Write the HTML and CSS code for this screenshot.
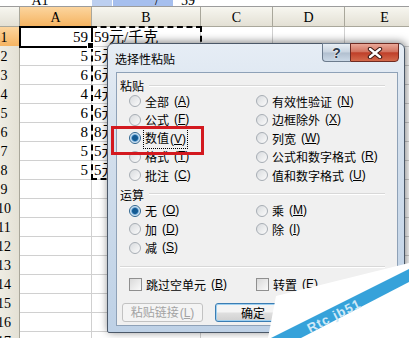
FILE: index.html
```html
<!DOCTYPE html>
<html lang="zh-CN">
<head>
<meta charset="UTF-8">
<meta name="viewport" content="width=device-width, initial-scale=1.0">
<title>选择性粘贴 - 数值</title>
<link rel="stylesheet" href="styles.css">
</head>
<body>

<div id="excel">

<div class="formula-bar">
<div class="name-box"><span>A1</span></div>
<div class="fx-btn"></div>
<div class="fx-btn wide"><span>/</span></div>
<div class="formula"><span>59</span></div>
</div>

<div class="row head">
<div class="corner"></div>
<div class="col active">A</div>
<div class="col">B</div>
<div class="col">C</div>
<div class="col">D</div>
<div class="col">E</div>
</div>

<div class="row"><div class="num active">1</div><div class="cell val current">59</div><div class="cell">59元/千克</div><div class="cell"></div><div class="cell"></div><div class="cell"></div></div>
<div class="row"><div class="num">2</div><div class="cell val">5</div><div class="cell">5元/千克</div><div class="cell"></div><div class="cell"></div><div class="cell"></div></div>
<div class="row"><div class="num">3</div><div class="cell val">6</div><div class="cell">6元/千克</div><div class="cell"></div><div class="cell"></div><div class="cell"></div></div>
<div class="row"><div class="num">4</div><div class="cell val">4</div><div class="cell">4元/千克</div><div class="cell"></div><div class="cell"></div><div class="cell"></div></div>
<div class="row"><div class="num">5</div><div class="cell val">6</div><div class="cell">6元/千克</div><div class="cell"></div><div class="cell"></div><div class="cell"></div></div>
<div class="row"><div class="num">6</div><div class="cell val">8</div><div class="cell">8元/千克</div><div class="cell"></div><div class="cell"></div><div class="cell"></div></div>
<div class="row"><div class="num">7</div><div class="cell val">5</div><div class="cell">5元/千克</div><div class="cell"></div><div class="cell"></div><div class="cell"></div></div>
<div class="row"><div class="num">8</div><div class="cell val">5</div><div class="cell">5元/千克</div><div class="cell"></div><div class="cell"></div><div class="cell"></div></div>
<div class="row"><div class="num">9</div><div class="cell"></div><div class="cell"></div><div class="cell"></div><div class="cell"></div><div class="cell"></div></div>
<div class="row"><div class="num">10</div><div class="cell"></div><div class="cell"></div><div class="cell"></div><div class="cell"></div><div class="cell"></div></div>
<div class="row"><div class="num">11</div><div class="cell"></div><div class="cell"></div><div class="cell"></div><div class="cell"></div><div class="cell"></div></div>
<div class="row"><div class="num">12</div><div class="cell"></div><div class="cell"></div><div class="cell"></div><div class="cell"></div><div class="cell"></div></div>
<div class="row"><div class="num">13</div><div class="cell"></div><div class="cell"></div><div class="cell"></div><div class="cell"></div><div class="cell"></div></div>
<div class="row"><div class="num">14</div><div class="cell"></div><div class="cell"></div><div class="cell"></div><div class="cell"></div><div class="cell"></div></div>
<div class="row"><div class="num">15</div><div class="cell"></div><div class="cell"></div><div class="cell"></div><div class="cell"></div><div class="cell"></div></div>
<div class="row"><div class="num">16</div><div class="cell"></div><div class="cell"></div><div class="cell"></div><div class="cell"></div><div class="cell"></div></div>
<div class="row"><div class="num">17</div><div class="cell"></div><div class="cell"></div><div class="cell"></div><div class="cell"></div><div class="cell"></div></div>

<!-- copied range B1:B8 -->
<div class="copy-range"></div>

<!-- Paste special dialog -->
<div class="dialog">
<div class="title-bar">
<div class="title">选择性粘贴</div>
<div class="caption-btn help">?</div>
<div class="caption-btn close">
<svg width="16" height="12" viewBox="0 0 16 12"><path d="M3 2 L13 10 M13 2 L3 10" stroke="#3b1712" stroke-width="4.4" stroke-linecap="round"/><path d="M3 2 L13 10 M13 2 L3 10" stroke="#fff" stroke-width="2.4" stroke-linecap="round"/></svg>
</div>
</div>

<div class="client">
<div class="legend">粘贴</div>
<div class="options">
<div class="opt"><span class="radio"></span>全部<span class="key">(<u>A</u>)</span></div>
<div class="opt"><span class="radio"></span>有效性验证<span class="key">(<u>N</u>)</span></div>
<div class="opt"><span class="radio"></span>公式<span class="key">(<u>F</u>)</span></div>
<div class="opt"><span class="radio"></span>边框除外<span class="key">(<u>X</u>)</span></div>
<div class="opt"><span class="radio on"></span><span class="focus">数值<span class="key">(<u>V</u>)</span></span></div>
<div class="opt"><span class="radio"></span>列宽<span class="key">(<u>W</u>)</span></div>
<div class="opt"><span class="radio"></span>格式<span class="key">(<u>T</u>)</span></div>
<div class="opt"><span class="radio"></span>公式和数字格式<span class="key">(<u>R</u>)</span></div>
<div class="opt"><span class="radio"></span>批注<span class="key">(<u>C</u>)</span></div>
<div class="opt"><span class="radio"></span>值和数字格式<span class="key">(<u>U</u>)</span></div>
</div>

<div class="legend second">运算</div>
<div class="options ops">
<div class="opt"><span class="radio on"></span>无<span class="key">(<u>O</u>)</span></div>
<div class="opt"><span class="radio"></span>乘<span class="key">(<u>M</u>)</span></div>
<div class="opt"><span class="radio"></span>加<span class="key">(<u>D</u>)</span></div>
<div class="opt"><span class="radio"></span>除<span class="key">(<u>I</u>)</span></div>
<div class="opt"><span class="radio"></span>减<span class="key">(<u>S</u>)</span></div>
</div>

<div class="separator"></div>

<div class="options checks">
<div class="opt"><span class="check"></span>跳过空单元<span class="key">(<u>B</u>)</span></div>
<div class="opt"><span class="check"></span>转置<span class="key">(<u>E</u>)</span></div>
</div>

<div class="buttons">
<button class="btn" disabled>粘贴链接<span class="key">(<u>L</u>)</span></button>
<button class="btn default">确定</button>
<button class="btn">取消</button>
</div>
</div>

<div class="mark"></div>
</div>

<!-- watermark corner -->
<svg class="watermark" width="149" height="88" viewBox="260 250 149 88">
<polygon points="276,296 409,263 409,338 268,338" fill="#fff"/>
<polygon points="271,338 301,338 409,282 409,269" fill="#36a2da"/>
<text x="310" y="333" transform="rotate(-27 310 333)" font-family="Liberation Sans, sans-serif" font-size="13" font-weight="bold" fill="#cfe9f7" letter-spacing="1">Rtc  jb51</text>
</svg>

</div>
</body>
</html>
```

FILE: styles.css
```css
body {
margin: 0;
background: #fff;
font-family: "Liberation Serif", "Noto Sans CJK SC", serif;
}

#excel {
position: relative;
width: 409px;
height: 338px;
overflow: hidden;
}

/* formula bar, only its lower edge shows */
.formula-bar {
display: flex;
height: 7px;
box-sizing: border-box;
border-bottom: 1px solid #9c9c9c;
font-size: 14px;
}

.formula-bar > div {
display: flex;
align-items: flex-end;
height: 6px;
line-height: 10px;
overflow: hidden;
}

.name-box {
width: 92px;
justify-content: center;
padding-right: 12px;
box-sizing: border-box;
}

.fx-btn {
width: 20px;
background: #bccff0;
}

.fx-btn.wide {
width: 60px;
margin-left: 1px;
background: #a6bfee;
justify-content: flex-end;
padding-right: 14px;
box-sizing: border-box;
}

.formula {
padding-left: 8px;
}

/* sheet grid */
.row {
display: grid;
grid-template-columns: 20px 72px 109px 72px 72px 80px;
height: 19px;
}

.row > div {
box-sizing: border-box;
border-right: 1px solid #d0d0d0;
border-bottom: 1px solid #d0d0d0;
white-space: nowrap;
overflow: hidden;
}

.row.head {
height: 20px;
}

.head > div {
background: linear-gradient(#f7f6f0, #e3e0d4);
border-right-color: #a9a79b;
border-bottom-color: #a9a79b;
font-size: 14px;
line-height: 18px;
padding-top: 2px;
text-align: center;
}

.head > .active,
.row > .num.active {
background: linear-gradient(#fcd59e, #f5b462);
}

.row > .num {
display: flex;
justify-content: center;
padding-right: 11px;
overflow: visible;
background: linear-gradient(90deg, #eeece3, #e4e1d5);
border-right-color: #a9a79b;
border-bottom-color: #c5c3b8;
font-size: 14px;
line-height: 17px;
padding-top: 2px;
}

.cell {
font-size: 15px;
line-height: 17px;
padding: 2px 2px 0;
}

.cell.val {
text-align: right;
padding-right: 3px;
}

.row > .cell.current {
position: relative;
overflow: visible;
outline: 2px solid #000;
outline-offset: -1px;
z-index: 1;
}

.cell.current::after {
content: "";
position: absolute;
right: -3px;
bottom: -3px;
width: 5px;
height: 5px;
background: #000;
border: 1px solid #fff;
}

.copy-range {
position: absolute;
left: 91px;
top: 26px;
width: 111px;
height: 154px;
box-sizing: border-box;
border: 2px dashed #000;
}

/* dialog */
.dialog {
position: absolute;
left: 107px;
top: 43px;
width: 298px;
height: 290px;
box-sizing: border-box;
border: 1px solid #4b5868;
border-radius: 6px 6px 2px 2px;
background: linear-gradient(#e6edf5, #d3dfec 35%, #bed1e6);
box-shadow: 1px -1px 8px rgba(0, 0, 0, .5);
display: flex;
flex-direction: column;
font-family: "Noto Sans CJK SC", sans-serif;
font-size: 12px;
color: #000;
}

.key {
font-family: "Liberation Sans", sans-serif;
margin-left: 1px;
}

.title-bar {
display: flex;
height: 28px;
flex: none;
}

.title {
flex: 1;
padding: 8px 0 0 7px;
line-height: 14px;
}

.caption-btn {
margin-top: -1px;
height: 19px;
box-sizing: border-box;
display: flex;
align-items: center;
justify-content: center;
}

.help {
width: 28px;
border: 1px solid #6c7b8d;
border-right: 0;
border-radius: 0 0 0 4px;
background: linear-gradient(#e9eff5, #c8d3df 48%, #b1bfcf 52%, #cbd8e6);
color: #2d3b4b;
font-family: "Liberation Sans", sans-serif;
font-weight: bold;
font-size: 14px;
text-shadow: 0 0 2px #fff, 0 0 1px #fff;
}

.close {
width: 49px;
margin-right: 5px;
border: 1px solid #6f2b22;
border-radius: 0 0 4px 0;
background: linear-gradient(#eaa898, #d27460 45%, #bf3f29 52%, #d46a4c);
}

.client {
flex: 1;
margin: 0 6px 6px 8px;
border: 1px solid #8ea1b7;
background: #f0f0f0;
padding: 6px 12px 0 3px;
}

.legend {
display: flex;
align-items: center;
gap: 5px;
line-height: 13px;
}

.legend::after {
content: "";
flex: 1;
border-top: 1px solid #d8d8d8;
border-bottom: 1px solid #fff;
}

.legend.second {
margin-top: 3px;
}

.options {
display: grid;
grid-template-columns: 127px 1fr;
grid-auto-rows: 18.5px;
margin-left: 9px;
}

.options.ops {
margin-top: 1px;
}

.options.checks {
grid-auto-rows: 18px;
margin-top: 7px;
}

.opt {
display: flex;
align-items: center;
gap: 4px;
line-height: 15px;
white-space: nowrap;
}

.opt u,
.btn u {
text-decoration-thickness: 1px;
}

.radio {
flex: none;
width: 12px;
height: 12px;
box-sizing: border-box;
border-radius: 50%;
border: 1px solid #a7adb4;
background: linear-gradient(135deg, #d8dbde, #fbfbfb);
}

.radio.on {
border-color: #2f6690;
background: radial-gradient(circle, #145a92 0 2.5px, #4c91c8 3.2px, #b8d6ee 4px, #eaf2f9 5px);
}

.check {
flex: none;
width: 13px;
height: 13px;
box-sizing: border-box;
border: 1px solid #8f8f8f;
background: linear-gradient(135deg, #d9d9d9, #fafafa);
}

.focus {
outline: 1px dotted #000;
outline-offset: 1px;
}

.separator {
margin-top: 9px;
border-top: 1px solid #d8d8d8;
border-bottom: 1px solid #fff;
}

.buttons {
display: flex;
gap: 12px;
margin: 10px 0 0 2px;
}

.btn {
height: 19px;
width: 76px;
padding: 0;
border: 1px solid #8b8b8b;
border-radius: 3px;
background: linear-gradient(#f4f4f4 45%, #dedede 55%, #d0d0d0);
font-family: inherit;
font-size: 12px;
line-height: 15px;
color: #000;
}

.btn:disabled {
width: 81px;
color: #a3a3a3;
border-color: #c2c2c2;
background: #f4f4f4;
}

.btn.default {
border-color: #3b7db3;
box-shadow: inset 0 0 0 1px #9fd0f0;
}

.mark {
position: absolute;
left: 3px;
top: 82px;
width: 93px;
height: 29px;
box-sizing: border-box;
border: 3px solid #d3191f;
}

.watermark {
position: absolute;
left: 260px;
top: 250px;
}
```
